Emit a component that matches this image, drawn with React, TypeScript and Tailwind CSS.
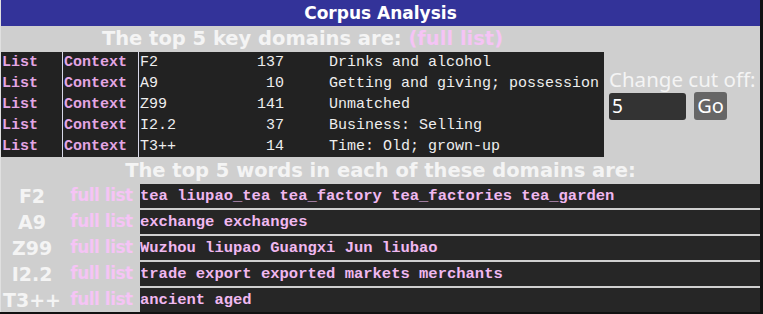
import React from "react";

const top = [
  { d: "F2", n: 137, t: "Drinks and alcohol" },
  { d: "A9", n: 10, t: "Getting and giving; possession" },
  { d: "Z99", n: 141, t: "Unmatched" },
  { d: "I2.2", n: 37, t: "Business: Selling" },
  { d: "T3++", n: 14, t: "Time: Old; grown-up" },
];

const words = [
  { d: "F2", w: "tea liupao_tea tea_factory tea_factories tea_garden" },
  { d: "A9", w: "exchange exchanges" },
  { d: "Z99", w: "Wuzhou liupao Guangxi Jun liubao" },
  { d: "I2.2", w: "trade export exported markets merchants" },
  { d: "T3++", w: "ancient aged" },
];

const mono = "font-['Liberation_Mono','DejaVu_Sans_Mono',monospace]";
const sans = "font-['DejaVu_Sans','Verdana',sans-serif]";

export default function App() {
  return (
    <div className="w-[763px] h-[314px] bg-[#111] overflow-hidden">
      <div className="w-[760px] bg-[#cfcfcf] border-l border-[#e0e0e0]">
        <div className={`h-[26px] bg-[#333399] text-white text-center font-bold text-[17px] leading-[26px] font-['DejaVu_Sans',sans-serif]`}>
          Corpus Analysis
        </div>
        <div className="flex">
          <div className="w-[603px]">
            <div className={`h-[26px] text-center text-[#f4f4f4] font-bold text-[19.5px] leading-[26px] ${sans}`}>
              The top 5 key domains are: <span className="text-[#f5c4f5]">(full list)</span>
            </div>
            <div className={`bg-[#222] ${mono} text-[15px]`}>
              {top.map((r) => (
                <div key={r.d} className="flex h-[21px] leading-[21px]">
                  <div className="w-[62px] text-[#e4a6e4] font-bold border-r border-[#d8d8e8] pl-[1px]">List</div>
                  <div className="w-[76px] text-[#e4a6e4] font-bold border-r border-[#d8d8e8] pl-[1px]">Context</div>
                  <div className="w-[80px] text-[#eee] pl-[1px]">{r.d}</div>
                  <div className="w-[65px] text-[#eee] text-right">{r.n}</div>
                  <div className="pl-[45px] text-[#eee] whitespace-nowrap">{r.t}</div>
                </div>
              ))}
            </div>
          </div>
          <div className="pl-[5px] pt-[41px]">
            <div className="text-[#f4f4f4] text-[20.5px] leading-[24px] whitespace-nowrap font-['Noto_Sans','Open_Sans',sans-serif]">Change cut off:</div>
            <div className="flex items-center gap-[8px] mt-[1px]">
              <div className="w-[77px] h-[27px] bg-[#333] rounded-[3px] text-white text-[19px] leading-[27px] pl-[3px] font-['Noto_Sans',sans-serif]">5</div>
              <div className="w-[33px] h-[28px] bg-[#666] rounded-[3px] text-white text-[20px] leading-[28px] text-center font-['Noto_Sans',sans-serif]">Go</div>
            </div>
          </div>
        </div>
        <div className={`h-[27px] text-center text-[#f4f4f4] font-bold text-[19.5px] leading-[27px] ${sans}`}>
          The top 5 words in each of these domains are:
        </div>
        <div className="flex flex-col gap-[2px]">
          {words.map((r) => (
            <div key={r.d} className="flex h-[24px] items-center">
              <div className={`w-[62px] text-center text-[#f4f4f4] font-bold text-[19px] ${sans}`}>{r.d}</div>
              <div className={`w-[77px] text-center text-[#f5c4f5] font-bold text-[17px] tracking-[-0.5px] ${sans}`}>full list</div>
              <div className={`flex-1 h-full bg-[#262626] text-[#f0b8f0] font-bold text-[15.5px] leading-[24px] ${mono}`}>{r.w}</div>
            </div>
          ))}
        </div>
      </div>
    </div>
  );
}
